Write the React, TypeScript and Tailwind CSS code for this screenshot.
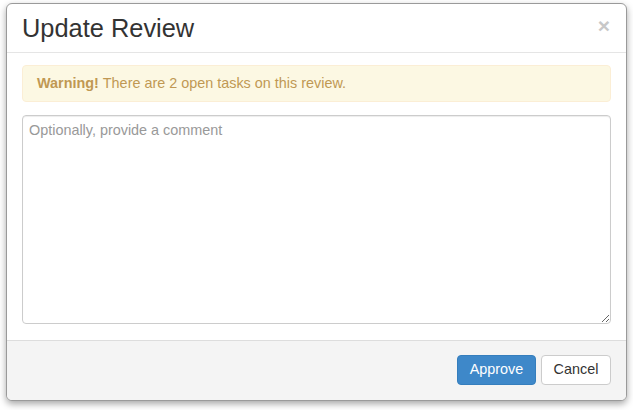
export default function App() {
  return (
    <div
      className="min-h-[410px] bg-white pl-[6px] pt-[3px]"
      style={{ fontFamily: '"Liberation Sans", Arial, sans-serif' }}
    >
      <div className="w-[621px] overflow-hidden rounded-[6px] border border-[#9a9a9a] bg-white shadow-[0_3px_7px_rgba(0,0,0,0.35)]">
        {/* Header */}
        <div className="flex h-[49px] items-center justify-between border-b border-[#e5e5e5] pl-[15px] pr-[16px]">
          <h3 className="pt-[1px] text-[25.4px] leading-none text-[#333]">Update Review</h3>
          <button className="-mt-[5px] text-[21px] font-bold leading-none text-[#c8c8c8]">×</button>
        </div>

        {/* Body */}
        <div className="px-[15px] pb-[16px] pt-[12px]">
          <div className="flex h-[37px] items-center rounded-[4px] border border-[#fbeed5] bg-[#fcf8e3] px-[14px] text-[14.4px] text-[#c09853]">
            <strong className="mr-[4px]">Warning!</strong>
            There are 2 open tasks on this review.
          </div>
          <textarea
            className="mt-[13px] block h-[209px] w-full resize-y rounded-[4px] border border-[#cccccc] px-[6px] py-[4px] text-[14.4px] text-[#555] shadow-[inset_0_1px_1px_rgba(0,0,0,0.075)] outline-none placeholder:text-[#999]"
            placeholder="Optionally, provide a comment"
          />
        </div>

        {/* Footer */}
        <div className="flex h-[60px] justify-end gap-[5px] border-t border-[#dddddd] bg-[#f4f4f4] pr-[15px] pt-[14px]">
          <button className="h-[30px] w-[79px] rounded-[4px] border border-[#357ebd] bg-[#3e88c9] text-[14.4px] text-white">
            Approve
          </button>
          <button className="h-[30px] w-[70px] rounded-[4px] border border-[#cccccc] bg-white text-[14.4px] text-[#333]">
            Cancel
          </button>
        </div>
      </div>
    </div>
  )
}
